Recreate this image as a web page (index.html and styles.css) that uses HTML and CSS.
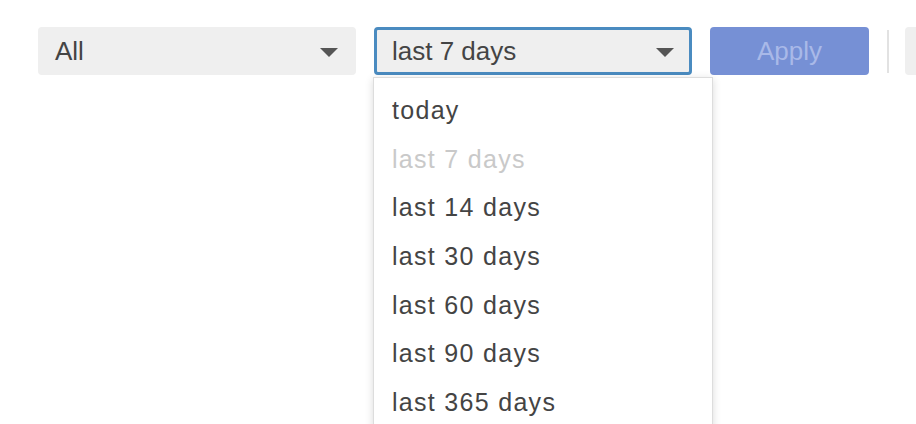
FILE: index.html
```html
<!DOCTYPE html>
<html lang="en">
<head>
    <meta charset="UTF-8">
    <title>Report filters</title>
    <link rel="stylesheet" href="styles.css">
</head>
<body>
    <div class="page">
        <div class="toolbar">
            <div class="select">
                <span class="select-label">All</span>
                <span class="caret"></span>
            </div>

            <div class="select-wrap">
                <div class="select focused">
                    <span class="select-label">last 7 days</span>
                    <span class="caret"></span>
                </div>
                <ul class="menu">
                    <li class="menu-item">today</li>
                    <li class="menu-item disabled">last 7 days</li>
                    <li class="menu-item">last 14 days</li>
                    <li class="menu-item">last 30 days</li>
                    <li class="menu-item">last 60 days</li>
                    <li class="menu-item">last 90 days</li>
                    <li class="menu-item">last 365 days</li>
                </ul>
            </div>

            <button class="apply" disabled>Apply</button>
            <span class="divider"></span>
            <div class="select stub"></div>
        </div>
    </div>
</body>
</html>
```

FILE: styles.css
```css
* {
    margin: 0;
    padding: 0;
    box-sizing: border-box;
}

body {
    font-family: 'Liberation Sans', Arial, sans-serif;
    background: #fff;
    color: #444;
}

.page {
    height: 424px;
    overflow: hidden;
}

.toolbar {
    display: flex;
    align-items: center;
    gap: 18px;
    padding: 27px 0 0 38px;
}

.select {
    width: 318px;
    height: 48px;
    display: flex;
    align-items: center;
    justify-content: space-between;
    padding: 0 15px 0 14px;
    background: #efefef;
    border: 3px solid #efefef;
    border-radius: 4px;
    font-size: 26px;
    color: #444;
    flex-shrink: 0;
}

.select.focused {
    border-color: #4a8bc0;
    padding-left: 15px;
}

.select-label {
    white-space: nowrap;
}

.caret {
    width: 0;
    height: 0;
    border-left: 9px solid transparent;
    border-right: 9px solid transparent;
    border-top: 9px solid #555;
    margin-top: 3px;
}

.select-wrap {
    position: relative;
}

/* open dropdown list hangs under the focused select */
.menu {
    position: absolute;
    top: 50px;
    left: -1px;
    width: 340px;
    list-style: none;
    background: #fff;
    border: 1px solid #ddd;
    padding-top: 8px;
    box-shadow: 0 2px 8px rgba(0, 0, 0, 0.15);
    z-index: 10;
}

.menu-item {
    height: 48.67px;
    line-height: 48.67px;
    padding-left: 18px;
    font-size: 25px;
    letter-spacing: 1.3px;
    color: #444;
}

.menu-item.disabled {
    color: #c9c9c9;
}

.apply {
    width: 159px;
    height: 48px;
    background: #7690d5;
    color: #a9b9e8;
    border: none;
    border-radius: 4px;
    font-family: inherit;
    font-size: 26px;
    flex-shrink: 0;
}

.divider {
    width: 2px;
    height: 43px;
    background: #e2e2e2;
    flex-shrink: 0;
}

.select.stub {
    width: 40px;
    margin-left: -2px;
}
```
